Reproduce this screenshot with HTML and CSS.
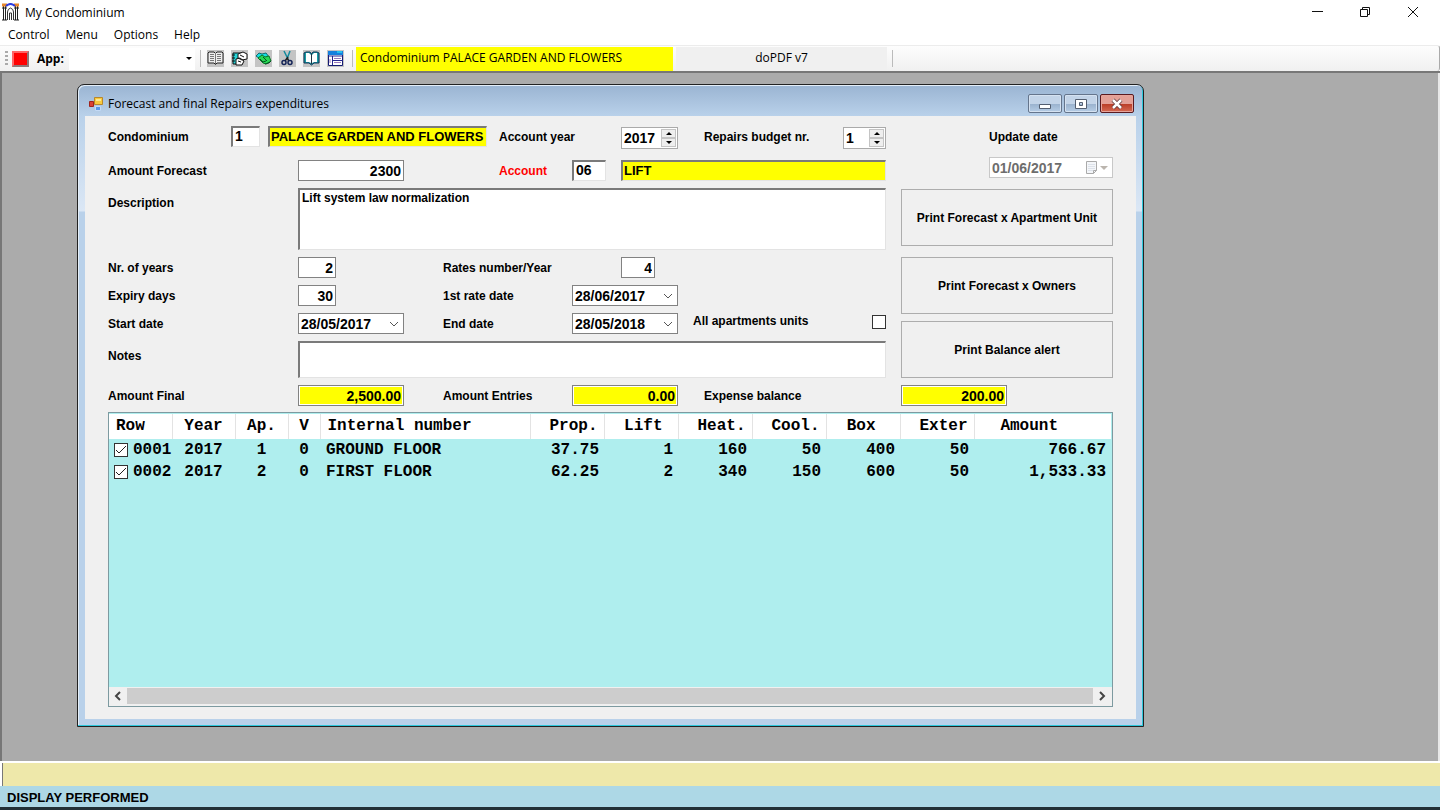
FILE: index.html
```html
<!DOCTYPE html>
<html lang="en">
<head>
<meta charset="utf-8">
<title>My Condominium</title>
<link rel="stylesheet" href="styles.css">
</head>
<body>
<header class="titlebar">
  <svg class="app-icon" width="17" height="18" viewBox="0 0 17 18" aria-hidden="true">
    <path d="M1.500 3v14M3.500 3v14M13.500 3v14M15.500 3v14" fill="none" stroke="#222"/>
    <path d="M0 17h5M12 17h5M0 5h5M12 5h5" stroke="#222"/>
    <path d="M0 2h5M12 2h5" stroke="#e8882a" stroke-width="3"/>
    <path d="M4 3Q8.500-1 13 3" fill="none" stroke="#2c3ce0" stroke-width="2"/>
    <path d="M5.500 17V9q0-3 3-4 3 1 3 4v8M7.500 17v-7h2v7" fill="none" stroke="#333"/>
  </svg>
  <h1 class="app-title">My Condominium</h1>
  <div class="caption-buttons">
    <button class="caption-btn" type="button" aria-label="Minimize"><svg width="12" height="12" viewBox="0 0 12 12"><path d="M1 5.500h11" stroke="#111"/></svg></button>
    <button class="caption-btn" type="button" aria-label="Restore"><svg width="12" height="12" viewBox="0 0 12 12"><path d="M1.500 3.500h7v7h-7zM3.500 3.500v-2h7v7h-2" fill="none" stroke="#111"/></svg></button>
    <button class="caption-btn" type="button" aria-label="Close"><svg width="12" height="12" viewBox="0 0 12 12"><path d="M1 1l10 10M11 1L1 11" stroke="#111"/></svg></button>
  </div>
</header>
<nav class="menubar">
  <a href="#control">Control</a><a href="#menu">Menu</a><a href="#options">Options</a><a href="#help">Help</a>
</nav>
<div class="toolbar">
  <span class="grip"></span>
  <button class="stop" type="button" aria-label="Exit"></button>
  <label class="app-label" for="app">App:</label>
  <div class="app-combo">
    <select id="app"><option></option></select>
    <svg width="6" height="3" viewBox="0 0 6 3" aria-hidden="true"><path d="M0 0h6L3 3z"/></svg>
  </div>
  <span class="separator"></span>
  <div class="tools">
    <button class="tool" type="button" aria-label="Register"><svg viewBox="0 0 17 17"><path d="M1 3l1-1h5l1.500 1.500L10 2h5l1 1v10H10l-1.500 1.500L7 13H1z" fill="#eee" stroke="#222"/><path d="M8.500 3v11M3 4.500h4M3 6.500h4M3 8.500h4M3 10.500h4M10 4.500h4M10 6.500h4M10 8.500h4M10 10.500h4" stroke="#777"/></svg></button>
    <button class="tool" type="button" aria-label="Edit accounts"><svg viewBox="0 0 17 17"><path d="M2 3h9v11H2z" fill="#25d5d8" stroke="#111"/><path d="M7 4l5-2 4 2v5l-5 1-4-2zM5 9l4-1 4 3-2 4H5z" fill="#fff" stroke="#111"/><path d="M1 5h3M1 8h3M1 11h3M9 5l4 2M7 11l3 1" stroke="#111"/></svg></button>
    <button class="tool" type="button" aria-label="Payments"><svg viewBox="0 0 17 17"><path d="M1 6l3-3 3 1 4-1 3 4-6 4z" fill="#16dfe3" stroke="#126b70"/><path d="M3 8l4-3 3 2 4-1 2 5-5 3-3-1z" fill="#27d854" stroke="#087426"/><path d="M5 9l3 3 3-1M8 7l4 4M10 14l4-1 2-2" fill="none" stroke="#045323"/></svg></button>
    <button class="tool" type="button" aria-label="Cut"><svg viewBox="0 0 17 17"><path d="M5 1l4 8M11 1L8 9" stroke="#148a9c" stroke-width="1.500"/><path d="M8 8l2 3M9 7l-3 4" stroke="#222" stroke-width="1.500"/><circle cx="5" cy="12.500" r="2" fill="none" stroke="#152558" stroke-width="1.500"/><circle cx="11" cy="12.500" r="2" fill="none" stroke="#152558" stroke-width="1.500"/></svg></button>
    <button class="tool" type="button" aria-label="Open book"><svg viewBox="0 0 17 17"><path d="M1 3l2-1h4l1.500 2L10 2h4l2 1v10H11l-2.500 2L6 13H1z" fill="#169ca5" stroke="#135"/><path d="M3 3h3l2 2v8l-2-1H3zM14 3h-3L9 5v8l2-1h3z" fill="#fff"/><path d="M8.500 4v10" stroke="#234"/></svg></button>
    <button class="tool" type="button" aria-label="Data grid"><svg viewBox="0 0 17 17"><path d="M1.500 1.500h14v14h-14z" fill="#fff" stroke="#151b72"/><path d="M1 1h15v4H1z" fill="#1680dd"/><path d="M10 2h5" stroke="#3ff"/><path d="M1 6h15M5.500 6v9M6 10.500h10" stroke="#25258d"/><path d="M7 8.500h7M7 12.500h7M3 9v4" stroke="#9a78bc"/></svg></button>
  </div>
  <span class="separator wide"></span>
  <span class="current">Condominium PALACE GARDEN AND FLOWERS</span>
  <span class="printer">doPDF v7</span>
  <span class="separator"></span>
</div>
<main class="workspace">
  <section class="window" aria-label="Forecast and final Repairs expenditures">
    <div class="window-title">
      <svg width="14" height="14" viewBox="0 0 14 14" aria-hidden="true"><path d="M5.500.500h8v7h-8z" fill="#f8ca3d" stroke="#b8872b"/><path d="M.500 4.500h4v5h-4z" fill="#d94135" stroke="#9e241e"/><path d="M6.500 9.500h5v4h-5z" fill="#5998e8" stroke="#c5daf5"/><path d="M7 2h5v2H7z" fill="#ffe891"/></svg>
      <h2>Forecast and final Repairs expenditures</h2>
      <div class="window-buttons">
        <button type="button" class="win-btn" aria-label="Minimize"><svg width="14" height="12" viewBox="0 0 14 12"><path d="M1.500 6.500h11v4h-11z" fill="#fff" stroke="#535e70"/></svg></button>
        <button type="button" class="win-btn" aria-label="Maximize"><svg width="14" height="12" viewBox="0 0 14 12"><path d="M1.500 1.500h11v9h-11zM5.500 4.500v3h3v-3z" fill="#fff" fill-rule="evenodd" stroke="#535e70"/></svg></button>
        <button type="button" class="win-btn win-close" aria-label="Close"><svg width="14" height="12" viewBox="0 0 14 12"><path d="M3 2l8 8M11 2l-8 8" stroke="#5c3436" stroke-width="4"/><path d="M3 2l8 8M11 2l-8 8" stroke="#fff" stroke-width="2.500"/></svg></button>
      </div>
    </div>
    <form class="client">
      <div class="fields">
        <label class="r1 c-label" for="condo">Condominium</label>
        <input class="r1 c-code box sunken" id="condo" value="1">
        <input class="r1 c-name box sunken yellow" aria-label="Condominium name" value="PALACE GARDEN AND FLOWERS">
        <label class="r1 c-mid" for="year">Account year</label>
        <div class="r1 c-last spinner"><input id="year" value="2017"><span class="steps"><button type="button" aria-label="Year up"><svg width="6" height="3" viewBox="0 0 6 3"><path d="M0 3h6L3 0z"/></svg></button><button type="button" aria-label="Year down"><svg width="6" height="3" viewBox="0 0 6 3"><path d="M0 0h6L3 3z"/></svg></button></span></div>
        <label class="r1 c-right" for="budget">Repairs budget nr.</label>
        <div class="r1 c-end spinner"><input id="budget" value="1"><span class="steps"><button type="button" aria-label="Budget up"><svg width="6" height="3" viewBox="0 0 6 3"><path d="M0 3h6L3 0z"/></svg></button><button type="button" aria-label="Budget down"><svg width="6" height="3" viewBox="0 0 6 3"><path d="M0 0h6L3 3z"/></svg></button></span></div>

        <label class="r2 c-label" for="forecast">Amount Forecast</label>
        <input class="r2 c-field box num" id="forecast" value="2300">
        <label class="r2 c-mid red" for="account">Account</label>
        <input class="r2 c-field2 box sunken account" id="account" value="06">
        <input class="r2 c-wide box sunken yellow" aria-label="Account name" value="LIFT">

        <label class="r3 c-label lower" for="description">Description</label>
        <textarea class="r3 c-area box sunken area-lg" id="description">Lift system law normalization</textarea>

        <label class="r4 c-label" for="years">Nr. of years</label>
        <input class="r4 c-field box num short" id="years" value="2">
        <label class="r4 c-label2" for="rates">Rates number/Year</label>
        <input class="r4 c-last box num rates" id="rates" value="4">

        <label class="r5 c-label" for="expiry">Expiry days</label>
        <input class="r5 c-field box num short" id="expiry" value="30">
        <label class="r5 c-label2" for="first">1st rate date</label>
        <div class="r5 c-field2 date"><input id="first" value="28/06/2017"><button type="button" aria-label="Choose first rate date"><svg width="10" height="6" viewBox="0 0 10 6"><path d="M1 1l4 4 4-4" fill="none" stroke="#555"/></svg></button></div>

        <label class="r6 c-label" for="start">Start date</label>
        <div class="r6 c-field date"><input id="start" value="28/05/2017"><button type="button" aria-label="Choose start date"><svg width="10" height="6" viewBox="0 0 10 6"><path d="M1 1l4 4 4-4" fill="none" stroke="#555"/></svg></button></div>
        <label class="r6 c-label2" for="end">End date</label>
        <div class="r6 c-field2 date"><input id="end" value="28/05/2018"><button type="button" aria-label="Choose end date"><svg width="10" height="6" viewBox="0 0 10 6"><path d="M1 1l4 4 4-4" fill="none" stroke="#555"/></svg></button></div>
        <div class="r6 c-all all-units"><label for="all">All apartments units</label><input class="check" type="checkbox" id="all"></div>

        <label class="r7 c-label lower" for="notes">Notes</label>
        <textarea class="r7 c-area box sunken area-sm" id="notes"></textarea>

        <label class="r8 c-label" for="final">Amount Final</label>
        <input class="r8 c-field box num total" id="final" value="2,500.00">
        <label class="r8 c-label2" for="entries">Amount Entries</label>
        <input class="r8 c-field2 box num total" id="entries" value="0.00">
        <label class="r8 c-right" for="balance">Expense balance</label>
        <input class="r8 c-side box num total balance" id="balance" value="200.00">

        <div class="side">
          <div class="update">
            <label for="update">Update date</label>
            <div class="date disabled"><input id="update" value="01/06/2017" disabled><svg width="24" height="14" viewBox="0 0 24 14" aria-hidden="true"><path d="M1.500.500h10v9l-3 3h-7z" fill="#f4f6f9" stroke="#aaa"/><path d="M3 3.500h7M3 5.500h7M3 7.500h7M3 9.500h5" stroke="#dde2ea"/><path d="M8.500 12.500v-3h3" fill="none" stroke="#aaa"/><path d="M15 5h8l-4 4z" fill="#bbb5ae"/></svg></div>
          </div>
          <button class="push" type="button">Print Forecast x Apartment Unit</button>
          <button class="push push-gap" type="button">Print Forecast x Owners</button>
          <button class="push" type="button">Print Balance alert</button>
        </div>
      </div>

      <div class="list">
        <div class="list-body">
          <table>
            <colgroup><col class="w-row"><col class="w-year"><col class="w-ap"><col class="w-v"><col class="w-name"><col class="w-num"><col class="w-num"><col class="w-num"><col class="w-num"><col class="w-num"><col class="w-num"><col></colgroup>
            <thead><tr><th>Row</th><th class="mid">Year</th><th class="mid">Ap.</th><th class="mid">V</th><th>Internal number</th><th class="end">Prop.</th><th class="end pad-1">Lift</th><th class="end">Heat.</th><th class="end">Cool.</th><th class="end pad-2">Box</th><th class="end">Exter</th><th class="end pad-5">Amount</th></tr></thead>
            <tbody>
              <tr><td><label class="row-check"><input class="check" type="checkbox" checked>0001</label></td><td class="mid">2017</td><td class="mid">1</td><td class="mid">0</td><td>GROUND FLOOR</td><td class="end">37.75</td><td class="end">1</td><td class="end">160</td><td class="end">50</td><td class="end">400</td><td class="end">50</td><td class="end">766.67</td></tr>
              <tr><td><label class="row-check"><input class="check" type="checkbox" checked>0002</label></td><td class="mid">2017</td><td class="mid">2</td><td class="mid">0</td><td>FIRST FLOOR</td><td class="end">62.25</td><td class="end">2</td><td class="end">340</td><td class="end">150</td><td class="end">600</td><td class="end">50</td><td class="end">1,533.33</td></tr>
            </tbody>
          </table>
        </div>
        <div class="scrollbar">
          <button type="button" aria-label="Scroll left"><svg width="8" height="10" viewBox="0 0 8 10"><path d="M6 1L2 5l4 4" fill="none" stroke="#444" stroke-width="2"/></svg></button>
          <span class="thumb"></span>
          <button type="button" aria-label="Scroll right"><svg width="8" height="10" viewBox="0 0 8 10"><path d="M2 1l4 4-4 4" fill="none" stroke="#444" stroke-width="2"/></svg></button>
        </div>
      </div>
    </form>
  </section>
</main>
<footer>
  <div class="message"></div>
  <div class="status">DISPLAY PERFORMED</div>
</footer>
</body>
</html>
```
FILE: styles.css
```css
* { box-sizing: border-box; }
body {
  margin: 0;
  min-height: 100vh;
  display: flex;
  flex-direction: column;
  background: #fff;
  color: #000;
  font: 12px "Open Sans", "Noto Sans", sans-serif;
}
button, input, select, textarea { font: inherit; color: inherit; margin: 0; padding: 0; border: 0; border-radius: 0; background: none; }
button { display: flex; align-items: center; justify-content: center; }
h1, h2 { margin: 0; font-size: 12px; font-weight: 400; }
a { color: inherit; text-decoration: none; }
svg { display: block; flex: none; }

.titlebar { display: flex; align-items: center; height: 24px; padding-left: 2px; gap: 6px; }
.caption-buttons { display: flex; margin-left: auto; padding-right: 3px; }
.caption-btn { width: 48px; height: 22px; }
.menubar { display: flex; gap: 16px; height: 21px; padding-left: 8px; line-height: 21px; }

.toolbar {
  display: flex;
  align-items: center;
  height: 26px;
  padding-left: 5px;
  border-top: 1px solid #ececec;
  border-right: 1px solid #aaa;
  border-radius: 0 3px 3px 0;
  background: linear-gradient(#fdfdfd, #f0f0f0);
}
.grip { width: 3px; height: 16px; background: repeating-linear-gradient(#aaa 0 2px, transparent 2px 4px); }
.stop { width: 17px; height: 16px; margin-left: 4px; background: #f00; border: 2px solid; border-color: #f66 #8d7777 #8d7777 #f66; }
.app-label { margin-left: 8px; width: 32px; font-weight: 700; }
.app-combo { display: flex; align-items: center; width: 126px; height: 22px; padding-right: 3px; background: #fff; }
.app-combo select { flex: 1; height: 20px; appearance: none; }
.separator { width: 1px; height: 17px; margin: 0 5px; background: #bbb; }
.wide { margin: 0 3px 0 8px; }
.tools { display: flex; gap: 7px; margin-left: 1px; }
.tool { width: 17px; height: 17px; background: #c4c4c4; }
.tool svg { width: 17px; height: 17px; }
.current, .printer { height: 24px; line-height: 22px; }
.current { width: 317px; padding-left: 4px; background: #ff0; }
.printer { width: 211px; margin-left: 3px; text-align: center; background: #f0f0f0; }

.workspace {
  position: relative;
  flex: 1;
  min-height: 660px;
  background: #ababab;
  border: solid #777;
  border-width: 2px 0 0 2px;
  box-shadow: inset -2px 0 #e8e8e8;
}
.window {
  position: absolute;
  left: 75px;
  top: 11px;
  width: 1067px;
  padding: 0 7px 7px;
  border: 1px solid #222;
  border-radius: 7px 7px 0 0;
  box-shadow: inset -1px -1px #2ec8dc, inset 1px 1px #e4eef8;
  background: linear-gradient(#9ab4d2, #b9d1ea 31px, #dbe7f5 126px, #b9d1ea 127px);
}
.window-title { display: flex; align-items: flex-start; height: 31px; padding: 9px 2px 0 4px; gap: 5px; }
.window-title > svg { margin-top: 3px; }
.window-title h2 { line-height: 20px; }
.window-buttons { display: flex; gap: 2px; margin-left: auto; }
.win-btn { width: 34px; height: 19px; border: 1px solid #65758c; border-radius: 2px; box-shadow: inset 0 0 0 1px #d5e2f1; background: linear-gradient(#c3d4e8 50%, #98b0cc 50%, #b6cde6); }
.win-close { border-color: #5a1a20; box-shadow: inset 0 0 0 1px #e6a49b; background: linear-gradient(#e3a097 50%, #b83a24 50%, #d56a54); }

.client { padding: 10px 23px 12px; background: #f0f0f0; font-family: "Liberation Sans", Arial, sans-serif; font-weight: 700; }
.fields {
  display: grid;
  grid-template-columns: 123px 37px 30px 106px 39px 56px 73px 49px 57px 15px 11px 139px 43px 15px 1fr;
  grid-template-rows: 34px 28px 69px 28px 28px 28px 44px 27px;
  align-items: start;
}
.fields label { line-height: 22px; white-space: nowrap; }
.fields .lower { padding-top: 4px; }
.red { color: #f00; }
.r1 { grid-row: 1; } .r2 { grid-row: 2; } .r3 { grid-row: 3; } .r4 { grid-row: 4; }
.r5 { grid-row: 5; } .r6 { grid-row: 6; } .r7 { grid-row: 7; } .r8 { grid-row: 8; }
.c-label { grid-column: 1 / 4; }
.c-code { grid-column: 2; width: 29px; }
.c-name { grid-column: 3 / 7; width: 219px; }
.c-field { grid-column: 4; }
.c-label2 { grid-column: 6 / 8; }
.c-mid { grid-column: 7 / 9; }
.c-field2 { grid-column: 8 / 10; }
.c-last { grid-column: 9; }
.c-wide { grid-column: 9 / 14; }
.c-area { grid-column: 4 / 14; }
.c-all { grid-column: 11 / 14; }
.c-right { grid-column: 12; }
.c-end { grid-column: 13; }
.c-side { grid-column: 15; }

.box { min-width: 0; height: 21px; padding: 0 2px; border: 1px solid #828282; background: #fff; font-size: 14px; line-height: 17px; }
.sunken { padding-bottom: 2px; border: solid; border-width: 2px 1px 1px 2px; border-color: #7a7a7a #e3e3e3 #e3e3e3 #7a7a7a; }
.yellow { padding-left: 1px; background: #ff0; font-size: 13px; }
.num { text-align: right; }
.short { width: 38px; }
.rates { width: 34px; }
.account { width: 34px; }
.total { background: #ff0; box-shadow: inset 0 0 0 1px #fff; }
.balance { width: 106px; }
textarea.box { resize: none; width: 100%; overflow: hidden; font-size: 12px; }
.area-lg { height: 62px; }
.area-sm { height: 37px; }

.spinner { display: flex; height: 22px; margin-top: 1px; border: 1px solid #aaa; background: #fff; font-size: 14px; }
.spinner input { flex: 1; min-width: 0; height: 19px; padding-left: 2px; }
.steps { display: flex; flex-direction: column; width: 16px; padding: 1px 1px 1px 0; }
.steps button { flex: 1; border: 1px solid #c4c4c4; background: #eee; }
.date { display: flex; height: 21px; border: 1px solid #828282; background: #fff; font-size: 14px; }
.date input { flex: 1; min-width: 0; padding-left: 2px; }
.date button { width: 18px; }
.disabled { align-items: center; border-color: #c8c8c8; color: #6d6d6d; padding-right: 3px; }
.all-units { display: flex; align-items: center; justify-content: space-between; height: 17px; }
.all-units label { line-height: 17px; }
.check { appearance: none; flex: none; width: 14px; height: 14px; border: 1px solid #333; background: #fff; }

.side { grid-column: 15; grid-row: 1 / 8; display: flex; flex-direction: column; }
.update { width: 124px; height: 63px; margin-left: auto; }
.update label { display: block; }
.update .date { margin-top: 9px; }
.push { height: 57px; border: 1px solid #adadad; background: #f0f0f0; }
.push-gap { margin: 11px 0 7px; }

.list { border: 1px solid #7d9aa0; background: #afeeee; }
.list-body { min-height: 274px; padding: 1px 1px 0 0; }
table { width: 100%; border-collapse: collapse; table-layout: fixed; font: 700 16px "Liberation Mono", "Courier New", monospace; }
.w-row { width: 63px; } .w-year { width: 63px; } .w-ap { width: 53px; } .w-v { width: 32px; } .w-name { width: 210px; } .w-num { width: 74px; }
th { height: 25px; padding: 0 6px 2px 7px; text-align: left; font-weight: 700; background: #fff; border-right: 1px solid #e3e3e3; white-space: nowrap; }
th:last-child { border-right: 0; }
td { height: 22px; padding: 0 5px 0 6px; line-height: 20px; white-space: nowrap; }
td:first-child { padding: 0 0 0 5px; }
.row-check { display: flex; align-items: center; gap: 5px; }
.row-check .check { background: #fff url("data:image/svg+xml,%3Csvg xmlns='http://www.w3.org/2000/svg' width='12' height='12'%3E%3Cpath d='M1 6l3 3 7-7' fill='none' stroke='%23222'/%3E%3C/svg%3E") center no-repeat; }
.mid { text-align: center; padding-left: 0; padding-right: 0; }
.end { text-align: right; }
.pad-1 { padding-right: 15px; }
.pad-2 { padding-right: 24px; }
.pad-5 { padding-right: 53px; }
.scrollbar { display: flex; height: 19px; padding: 1px 1px 2px 0; background: #f0f0f0; }
.scrollbar button { width: 18px; }
.thumb { flex: 1; background: #cdcdcd; }

footer { border-top: 2px solid #fff; font: 700 13px "Liberation Sans", Arial, sans-serif; }
.message { height: 23px; margin-left: 2px; border-left: 1px solid #777; background: #eee8aa; }
.status { height: 24px; padding-left: 7px; line-height: 23px; background: #add8e6; border-bottom: 3px solid #223036; }
```
